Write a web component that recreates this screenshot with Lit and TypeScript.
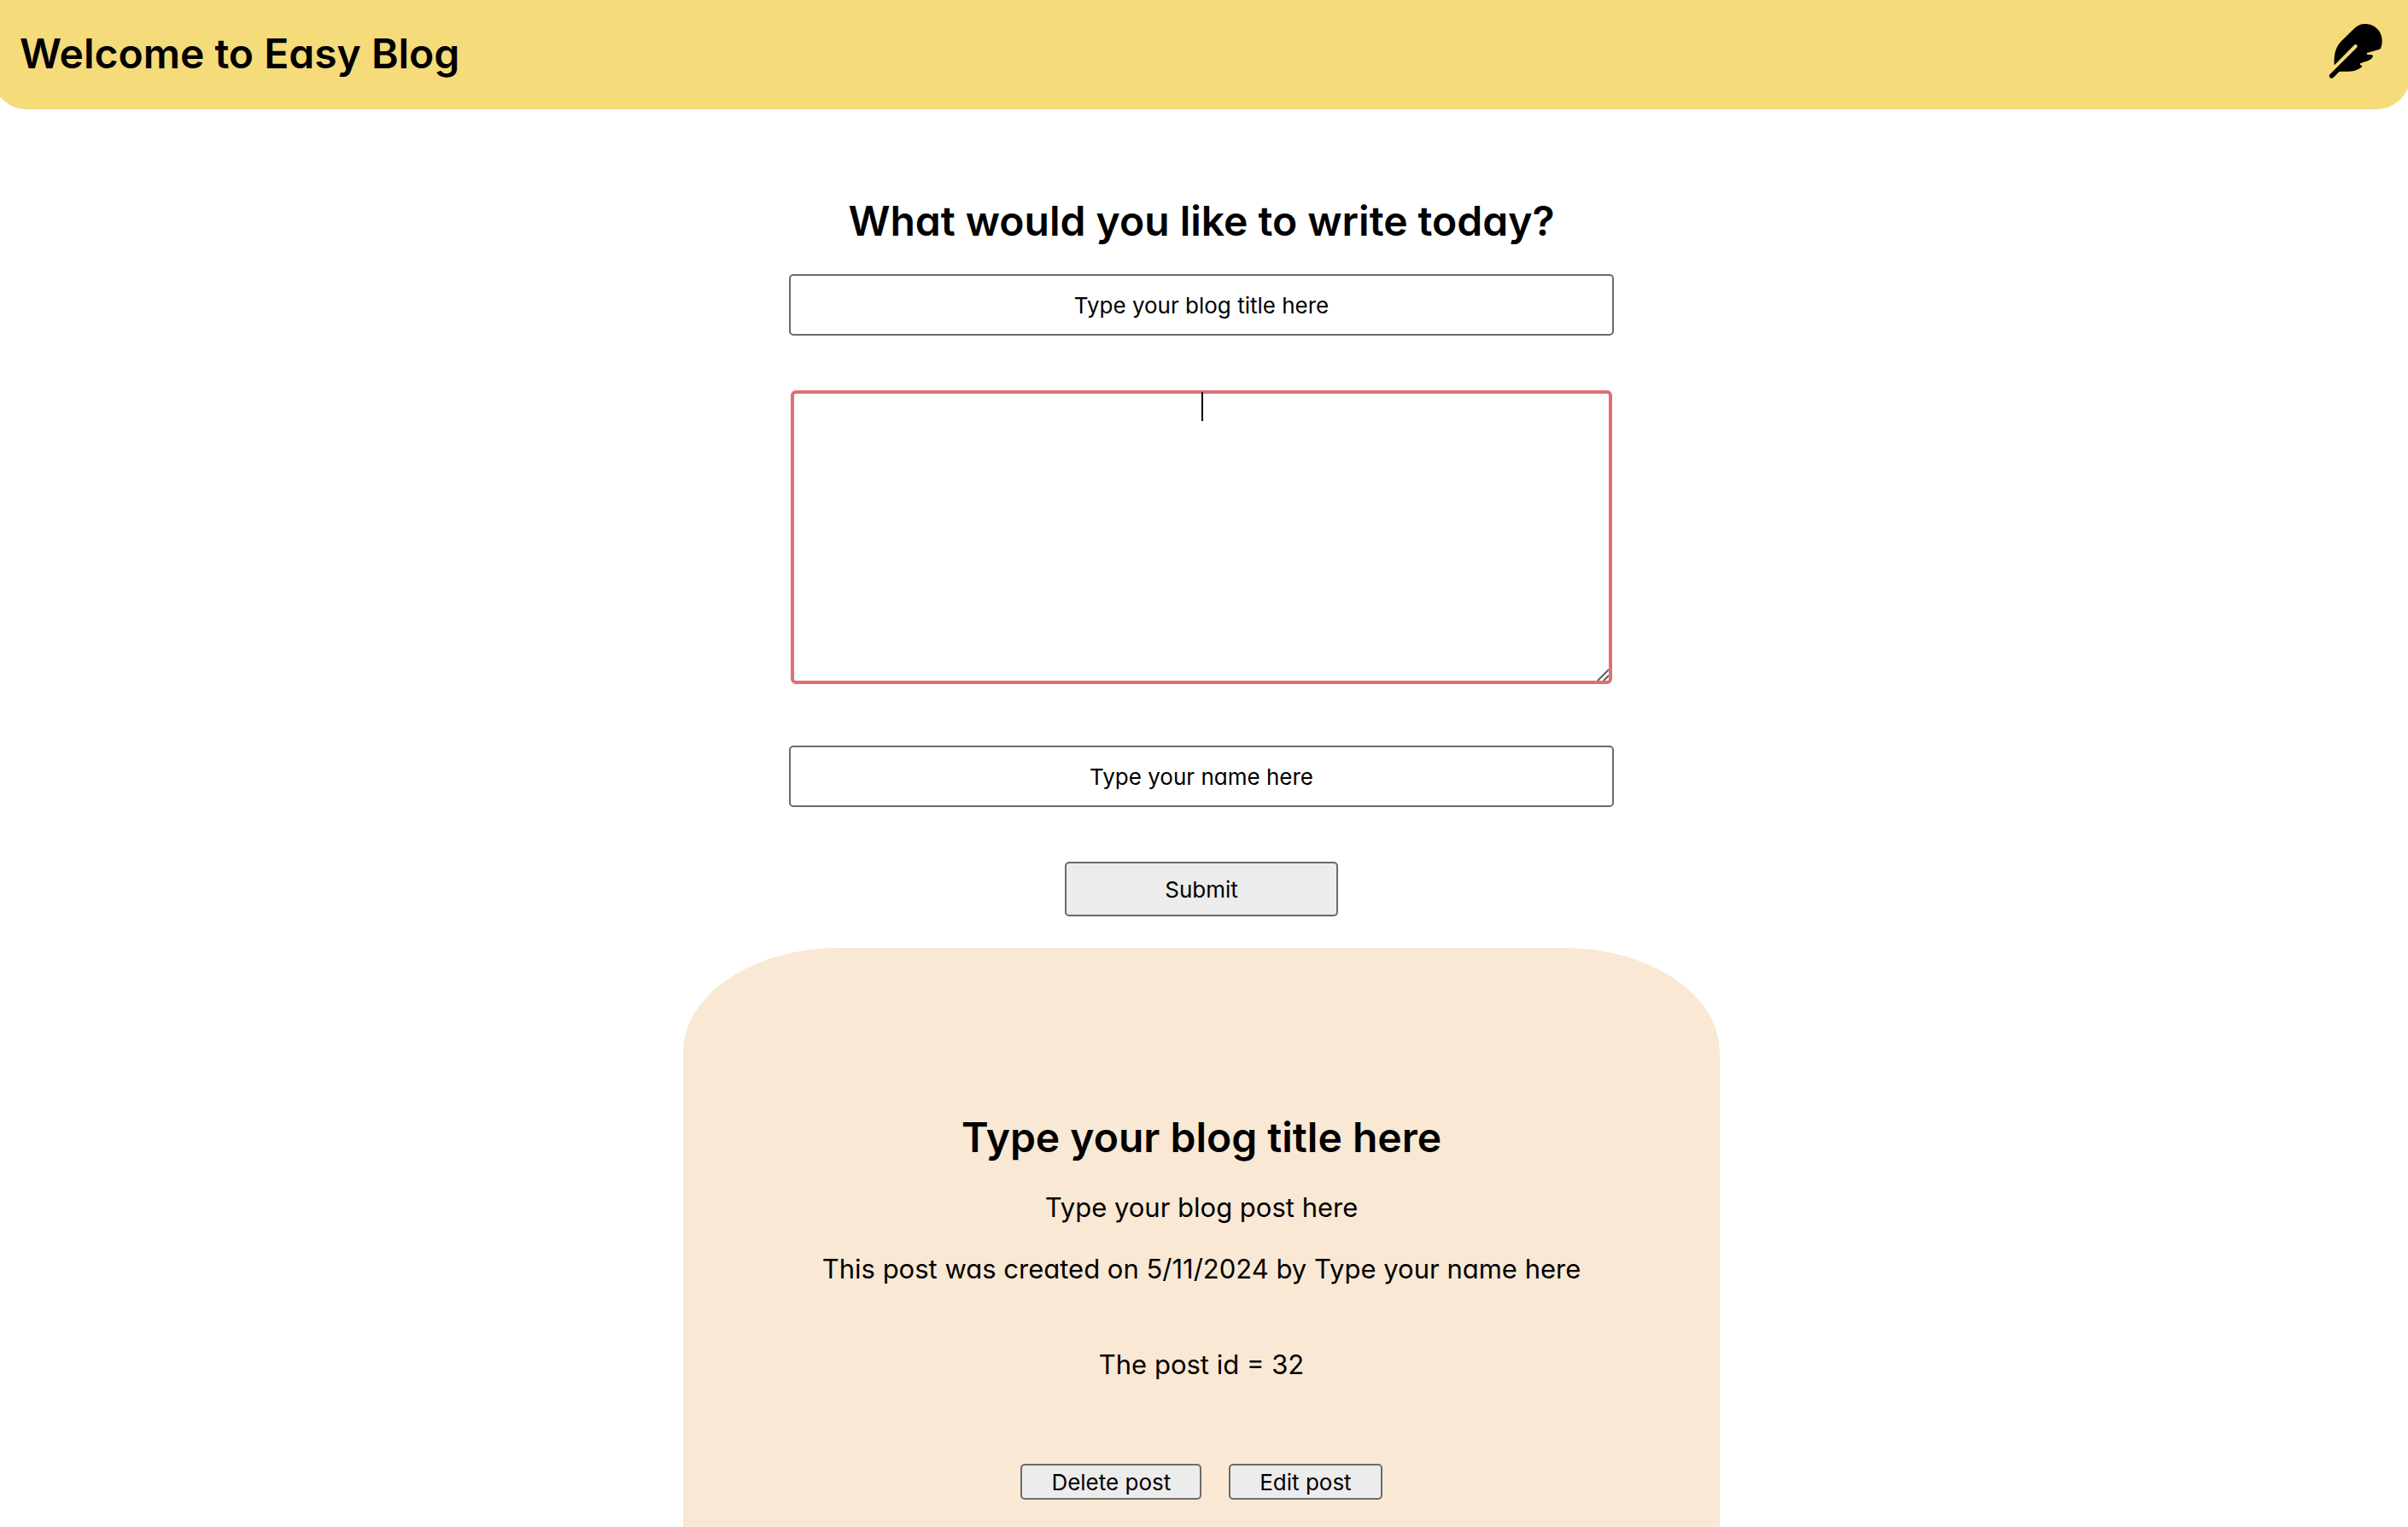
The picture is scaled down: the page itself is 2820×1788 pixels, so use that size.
import { LitElement, html, css } from "lit";
import { customElement } from "lit/decorators.js";

@customElement("app-root")
export class AppRoot extends LitElement {
  static styles = css`
    :host {
      display: block;
      font-family: Inter, "Noto Sans", sans-serif;
      font-feature-settings: "cv11", "ss03";
      font-size: 31px;
      color: #000;
      background: #fff;
    }
    * {
      box-sizing: border-box;
    }
    .page {
      display: flex;
      flex-direction: column;
      align-items: center;
      min-height: 100vh;
      padding-right: 6px;
      overflow: hidden;
    }
    h1,
    h2,
    p {
      margin: 0;
    }
    h1,
    h2 {
      font-size: 48px;
      line-height: 60px;
      font-weight: 600;
    }
    .bar {
      display: flex;
      align-items: center;
      justify-content: space-between;
      align-self: stretch;
      height: 128px;
      margin: 0 -9px;
      padding: 0 32px 2px;
      background: #f5db7a;
      border-radius: 0 0 40px 40px;
    }
    .feather {
      width: 64px;
      height: 66px;
      margin-bottom: 6px;
    }
    .form {
      display: flex;
      flex-direction: column;
      align-items: center;
      width: 966px;
      max-width: 100%;
      padding-top: 101px;
    }
    .field,
    .area,
    .btn {
      font: inherit;
      font-size: 26px;
      color: #000;
      text-align: center;
      margin: 0;
    }
    .field {
      width: 100%;
      height: 72px;
      border: 2px solid #6b6b6b;
      border-radius: 5px;
      background: #fff;
      outline: none;
    }
    .title {
      margin-top: 32px;
    }
    .wrap {
      position: relative;
      align-self: stretch;
      margin: 64px 2px 72px;
    }
    .area {
      display: block;
      width: 100%;
      height: 344px;
      border: 4px solid #df6f74;
      border-radius: 6px;
      background: #fff;
      outline: none;
      resize: none;
    }
    .caret {
      position: absolute;
      left: 50%;
      top: 2px;
      width: 2px;
      height: 34px;
      background: #000;
    }
    .grip {
      position: absolute;
      right: 4px;
      bottom: 4px;
      width: 14px;
      height: 14px;
    }
    .btn {
      border: 2px solid #6b6b6b;
      border-radius: 5px;
      background: #ececec;
      padding: 0;
    }
    .submit {
      width: 320px;
      height: 64px;
      margin-top: 64px;
    }
    .card {
      display: flex;
      flex-direction: column;
      align-items: center;
      flex-grow: 1;
      width: 1214px;
      max-width: 100%;
      margin-top: 37px;
      padding: 192px 32px 32px;
      text-align: center;
      line-height: 40px;
      background: #f9e8d4;
      border-radius: 15% 15% 0 0 / 122px 122px 0 0;
    }
    .body {
      margin-top: 32px;
    }
    .meta {
      margin-top: 32px;
    }
    .ident {
      margin-top: 72px;
    }
    .actions {
      display: flex;
      gap: 32px;
      margin-top: 96px;
    }
    .small {
      height: 42px;
      padding: 0 34px;
    }
  `;

  render() {
    return html`
      <div class="page">
        <header class="bar">
          <h1>Welcome to Easy Blog</h1>
          <svg class="feather" viewBox="202 81 192 198" aria-hidden="true">
            <path
              d="M222 228C220 187 228 163 248 143L294 98C304 89 316 84 330 84C364 84 390 110 390 143C390 155 388 163 384 171Q382 173 379 174L337 186Q335 192 340 192H352Q359 193 357 200Q352 209 340 214L314 222Q311 228 315 229Q322 231 318 236C303 247 286 251 270 251H240L219 272C211 280 200 271 206 262L301 167C306 160 299 152 292 158L224 227Z"
            />
          </svg>
        </header>
        <form class="form" @submit=${(e: Event) => e.preventDefault()}>
          <h2>What would you like to write today?</h2>
          <input class="field title" type="text" aria-label="Blog title" value="Type your blog title here" />
          <div class="wrap">
            <textarea class="area" aria-label="Blog post"></textarea>
            <span class="caret"></span>
            <svg class="grip" viewBox="0 0 14 14" aria-hidden="true">
              <path d="M1 14L14 1M8 14L14 8" fill="none" stroke="#5c5c5c" stroke-width="2" />
            </svg>
          </div>
          <input class="field" type="text" aria-label="Name" value="Type your name here" />
          <button class="btn submit" type="submit">Submit</button>
        </form>
        <article class="card">
          <h2>Type your blog title here</h2>
          <p class="body">Type your blog post here</p>
          <p class="meta">This post was created on 5/11/2024 by Type your name here</p>
          <p class="ident">The post id = 32</p>
          <div class="actions">
            <button class="btn small" type="button">Delete post</button>
            <button class="btn small" type="button">Edit post</button>
          </div>
        </article>
      </div>
    `;
  }
}
